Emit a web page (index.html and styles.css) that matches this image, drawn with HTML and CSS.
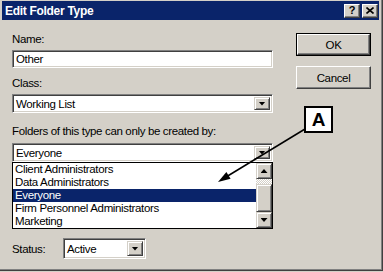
FILE: index.html
```html
<!DOCTYPE html>
<html lang="en">

<head>
  <meta charset="UTF-8" />
  <title>Edit Folder Type</title>
  <link rel="stylesheet" href="styles.css">
</head>

<body>

  <div class="window">
    <!-- Caption -->
    <div class="title-bar">
      <span class="title">Edit Folder Type</span>
      <div class="caption-btns">
        <span class="cap-btn help">?</span>
        <span class="cap-btn close">
          <svg width="8" height="7" viewBox="0 0 8 7">
            <path d="M0.5 0.5 L7.5 6.5 M7.5 0.5 L0.5 6.5" stroke="#000" stroke-width="1.6" fill="none" />
          </svg>
        </span>
      </div>
    </div>

    <div class="dialog-body">
      <!-- Fields -->
      <div class="form">
        <label class="field-label">Name:</label>
        <div class="field text-field">Other</div>

        <label class="field-label gap-md">Class:</label>
        <div class="field combo">
          <span class="combo-text">Working List</span>
          <span class="drop-btn"><i class="arrow"></i></span>
        </div>

        <label class="field-label gap-lg">Folders of this type can only be created by:</label>
        <div class="field combo combo-open">
          <span class="combo-text">Everyone</span>
          <span class="drop-btn"><i class="arrow"></i></span>
        </div>
        <div class="drop-list">
          <ul class="items">
            <li>Client Administrators</li>
            <li>Data Administrators</li>
            <li class="selected">Everyone</li>
            <li>Firm Personnel Administrators</li>
            <li>Marketing</li>
          </ul>
          <div class="scrollbar">
            <span class="scroll-btn"><i class="arrow up"></i></span>
            <span class="track"></span>
            <span class="thumb"></span>
            <span class="scroll-btn"><i class="arrow"></i></span>
          </div>
        </div>

        <div class="status-row">
          <label class="status-label">Status:</label>
          <div class="field combo combo-small">
            <span class="combo-text">Active</span>
            <span class="drop-btn"><i class="arrow"></i></span>
          </div>
        </div>
      </div>

      <!-- Buttons -->
      <div class="actions">
        <span class="btn btn-default"><span class="btn-face">OK</span></span>
        <span class="btn"><span class="btn-face">Cancel</span></span>
      </div>
    </div>

    <!-- Annotation -->
    <svg class="pointer" width="383" height="272" viewBox="0 0 383 272">
      <line x1="305" y1="129" x2="226" y2="177" stroke="#000" stroke-width="1.5" />
      <polygon points="218,182 230.6,178.8 226.4,172" fill="#000" />
    </svg>
    <div class="callout">A</div>
  </div>

</body>

</html>
```

FILE: styles.css
```css
:root {
  --face: #d4d0c8;
  --shadow: #808080;
  --dark: #404040;
  --light: #ffffff;
  --navy: #0a246a;
}

* {
  box-sizing: border-box;
}

html,
body {
  margin: 0;
  padding: 0;
}

body {
  width: 383px;
  height: 272px;
  overflow: hidden;
  background: var(--face);
  font-family: "Liberation Sans", Arial, sans-serif;
  font-size: 11.5px;
  letter-spacing: -0.35px;
  color: #000;
}

.window {
  position: relative;
  width: 383px;
  height: 271px;
  background: var(--face);
  border-right: 1px solid var(--dark);
  border-bottom: 1px solid var(--dark);
  box-shadow: inset -1px -1px 0 var(--shadow);
  padding: 1px 3px 0 2px;
}

/* caption */
.title-bar {
  display: flex;
  align-items: center;
  justify-content: space-between;
  height: 19px;
  background: var(--navy);
  padding: 0 1px 0 3px;
}

.title {
  color: #fff;
  font-weight: bold;
  font-size: 12px;
  letter-spacing: -0.3px;
}

.caption-btns {
  display: flex;
  gap: 2px;
}

.cap-btn {
  display: flex;
  align-items: center;
  justify-content: center;
  width: 16px;
  height: 14px;
  background: var(--face);
  border: 1px solid;
  border-color: var(--light) var(--dark) var(--dark) var(--light);
  box-shadow: inset -1px -1px 0 var(--shadow);
  font-weight: bold;
  font-size: 11px;
  letter-spacing: 0;
  line-height: 1;
}

/* body */
.dialog-body {
  display: flex;
  padding: 12px 0 0 10px;
}

.form {
  width: 261px;
}

.field-label {
  display: block;
  height: 14px;
  line-height: 14px;
  white-space: nowrap;
}

.gap-md {
  margin-top: 8px;
}

.gap-lg {
  margin-top: 11px;
}

.field {
  display: flex;
  align-items: center;
  background: #fff;
  border: 1px solid;
  border-color: var(--shadow) var(--light) var(--light) var(--shadow);
  box-shadow: inset 1px 1px 0 var(--dark), inset -1px -1px 0 var(--face);
  padding: 2px;
}

.text-field {
  height: 18px;
  margin-top: 4px;
  padding-left: 3px;
}

.combo {
  height: 19px;
  margin-top: 4px;
}

.combo-open {
  margin-top: 5px;
}

.combo-text {
  flex: 1;
  padding-left: 1px;
  white-space: nowrap;
}

.drop-btn {
  display: flex;
  align-items: center;
  justify-content: center;
  width: 16px;
  height: 100%;
  background: var(--face);
  border: 1px solid;
  border-color: var(--face) var(--dark) var(--dark) var(--face);
  box-shadow: inset 1px 1px 0 var(--light), inset -1px -1px 0 var(--shadow);
}

.arrow {
  display: block;
  width: 7px;
  height: 4px;
  background: #000;
  clip-path: polygon(0 0, 100% 0, 50% 100%);
}

.arrow.up {
  clip-path: polygon(50% 0, 100% 100%, 0 100%);
}

/* open list */
.drop-list {
  display: flex;
  height: 67px;
  background: #fff;
  border: 1px solid #000;
}

.items {
  flex: 1;
  margin: 0;
  padding: 0;
  list-style: none;
}

.items li {
  height: 13px;
  line-height: 13px;
  padding-left: 2px;
  white-space: nowrap;
}

.items li.selected {
  background: var(--navy);
  color: #fff;
}

.scrollbar {
  display: flex;
  flex-direction: column;
  width: 16px;
}

.scroll-btn,
.thumb {
  display: flex;
  align-items: center;
  justify-content: center;
  height: 16px;
  background: var(--face);
  border: 1px solid;
  border-color: var(--face) var(--dark) var(--dark) var(--face);
  box-shadow: inset 1px 1px 0 var(--light), inset -1px -1px 0 var(--shadow);
}

.track {
  height: 5px;
  background: repeating-conic-gradient(#fff 0 25%, var(--face) 0 50%) 0 0 / 2px 2px;
}

.thumb {
  height: 28px;
}

.status-row {
  display: flex;
  align-items: center;
  margin-top: 9px;
}

.status-label {
  width: 51px;
}

.combo-small {
  width: 83px;
  height: 21px;
  margin-top: 0;
}

/* buttons */
.actions {
  display: flex;
  flex-direction: column;
  gap: 10px;
  margin: 1px 0 0 23px;
}

.btn {
  display: block;
  width: 75px;
  height: 23px;
  border: 1px solid;
  border-color: var(--light) var(--dark) var(--dark) var(--light);
  box-shadow: inset -1px -1px 0 var(--shadow);
}

.btn-face {
  display: flex;
  align-items: center;
  justify-content: center;
  height: 100%;
}

.btn-default {
  border: 1px solid #000;
  box-shadow: none;
}

.btn-default .btn-face {
  border: 1px solid;
  border-color: var(--light) var(--dark) var(--dark) var(--light);
  box-shadow: inset -1px -1px 0 var(--shadow);
}

/* annotation */
.pointer {
  position: absolute;
  left: 0;
  top: 0;
  pointer-events: none;
}

.callout {
  position: absolute;
  left: 304px;
  top: 106px;
  width: 29px;
  height: 27px;
  display: flex;
  align-items: center;
  justify-content: center;
  background: #fff;
  border: 2px solid #000;
  font-weight: bold;
  font-size: 19px;
  letter-spacing: 0;
}
```
